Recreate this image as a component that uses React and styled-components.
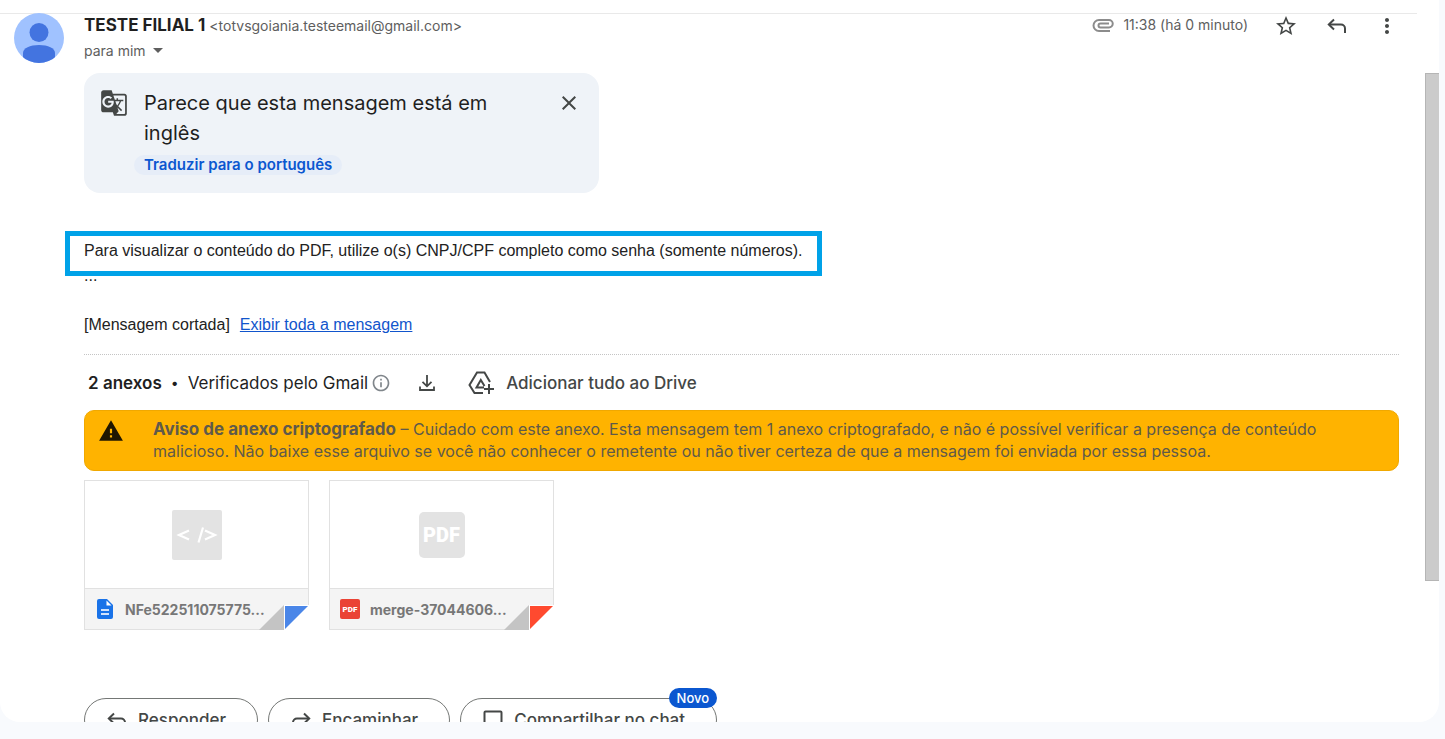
import styled, { createGlobalStyle } from 'styled-components';
import {
  MdArrowDropDown,
  MdStarBorder,
  MdMoreVert,
  MdGTranslate,
  MdClose,
  MdInfoOutline,
  MdWarning,
} from 'react-icons/md';

const GlobalStyle = createGlobalStyle`
  * {
    box-sizing: border-box;
  }
  body {
    margin: 0;
    background: #f8fafd;
    color: #1f1f1f;
    font-family: Inter, Roboto, sans-serif;
  }
  button {
    font-family: inherit;
    border: none;
    background: none;
    padding: 0;
    cursor: pointer;
  }
`;

const Page = styled.div`
  height: 100vh;
  padding: 0 6px 17px 0;
`;

const Panel = styled.main`
  display: flex;
  flex-direction: column;
  height: 100%;
  overflow: hidden;
  background: #fff;
  border-radius: 0 0 20px 20px;
`;

const TopLine = styled.div`
  flex: none;
  height: 14px;
  margin-right: 22px;
  border-bottom: 1px solid #e9e9e9;
`;

const Header = styled.header`
  flex: none;
  display: flex;
  align-items: flex-start;
  height: 59px;
  padding: 0 40px 0 14px;
  color: #5e5e5e;
`;

const Avatar = styled.svg`
  width: 50px;
  height: 50px;
  margin: -1px 20px 0 0;
`;

const Sender = styled.div`
  flex: 1;
  font-size: 14px;
`;

const SenderLine = styled.div`
  display: flex;
  align-items: center;
  gap: 4px;
  height: 22px;
`;

const Name = styled.strong`
  font-size: 17px;
  font-weight: 700;
  color: #1f1f1f;
`;

const Recipient = styled.button`
  display: flex;
  align-items: center;
  height: 28px;
  font-size: 14px;
  color: #5e5e5e;
`;

const HeaderTools = styled.div`
  display: flex;
  align-items: center;
  height: 24px;
  font-size: 14px;
`;

const Time = styled.span`
  height: 22px;
  line-height: 20px;
  margin: 0 26px 0 8px;
`;

const IconButton = styled.button`
  display: flex;
  align-items: center;
  justify-content: center;
  width: 24px;
  height: 24px;
  margin-right: ${({ $gap }) => $gap || 0}px;
  color: #444746;
`;

const Scroller = styled.div`
  flex: 1;
  display: flex;
  min-height: 0;
`;

const Content = styled.div`
  flex: 1;
  min-width: 0;
  padding: 0 26px 0 84px;
`;

const Track = styled.div`
  width: 14px;
`;

const Thumb = styled.div`
  height: 508px;
  background: #cbcbcb;
  border: solid #b5b5b5;
  border-width: 1px 0 1px 1px;
`;

const TranslateCard = styled.section`
  display: flex;
  align-items: flex-start;
  width: 515px;
  padding: 15px 18px 18px 16px;
  border-radius: 16px;
  background: #eff3f8;
  color: #444746;
`;

const TranslateIcon = styled(MdGTranslate)`
  flex: none;
  width: 28px;
  height: 30px;
`;

const TranslateText = styled.div`
  flex: 1;
  padding: 0 60px 0 6px;
`;

const TranslateTitle = styled.h2`
  margin: 0 0 7px 10px;
  font-size: 20px;
  font-weight: 400;
  line-height: 30px;
  color: #1f1f1f;
`;

const TranslateButton = styled.button`
  display: block;
  height: 20px;
  padding: 0 10px;
  border-radius: 10px;
  background: #e6edf8;
  font-size: 15px;
  font-weight: 600;
  line-height: 20px;
  color: #0b57d0;
`;

const CloseButton = styled(IconButton)`
  height: 30px;
`;

const Message = styled.div`
  padding: 45px 0 17px;
  border-bottom: 1px dotted #c4c4c4;
  font-family: 'Liberation Sans', Arial, sans-serif;
  font-size: 16px;
  line-height: 25px;
  color: #222;
`;

const Highlighted = styled.span`
  position: relative;
  display: inline-block;
  &::after {
    content: '';
    position: absolute;
    inset: -7px -19px -13px;
    border: 5px solid #00a2e8;
  }
`;

const Clipped = styled.p`
  margin: 24px 0 0;
`;

const Link = styled.a`
  margin-left: 10px;
  color: #1155cc;
`;

const AttachmentsBar = styled.div`
  display: flex;
  align-items: center;
  height: 55px;
  padding-left: 4px;
  font-size: 17px;
  color: #1f1f1f;
`;

const Count = styled.strong`
  font-weight: 600;
`;

const Dot = styled.span`
  margin: 0 9px;
  font-size: 14px;
`;

const InfoIcon = styled(MdInfoOutline)`
  width: 20px;
  height: 20px;
  margin: 0 24px 0 3px;
  color: #80868b;
`;

const DriveButton = styled.button`
  display: flex;
  align-items: center;
  gap: 11px;
  font-size: 17px;
  font-weight: 500;
  color: #444746;
`;

const Warning = styled.section`
  display: flex;
  align-items: flex-start;
  gap: 29px;
  padding: 7px 60px 8px 13px;
  border: 1px solid #f0a800;
  border-radius: 10px;
  background: #ffb300;
  font-size: 16px;
  line-height: 22px;
  color: #5f5a4a;
`;

const WarningIcon = styled(MdWarning)`
  flex: none;
  width: 26px;
  height: 26px;
  color: #201600;
`;

const WarningText = styled.p`
  margin: 0;
`;

const WarningTitle = styled.strong`
  font-size: 17px;
  font-weight: 700;
`;

const Files = styled.ul`
  display: flex;
  gap: 20px;
  margin: 9px 0 68px;
  padding: 0;
  list-style: none;
`;

const File = styled.li`
  position: relative;
  width: 225px;
  height: 150px;
  border: 1px solid #e1e1e1;
`;

const Preview = styled.div`
  display: flex;
  align-items: center;
  justify-content: center;
  height: 107px;
`;

const PdfTile = styled.span`
  display: flex;
  align-items: center;
  justify-content: center;
  width: ${({ $size }) => $size}px;
  height: ${({ $size }) => $size}px;
  border-radius: ${({ $size }) => ($size > 30 ? 5 : 2)}px;
  background: ${({ $color }) => $color};
  font-family: Roboto, sans-serif;
  font-size: ${({ $size }) => ($size > 30 ? 20 : 8)}px;
  font-weight: 900;
  color: #fff;
`;

const FileFooter = styled.div`
  display: flex;
  align-items: center;
  gap: 10px;
  height: 41px;
  padding-left: 10px;
  border-top: 1px solid #e1e1e1;
  background: #f4f4f4;
  font-size: 14px;
  font-weight: 700;
  color: #777;
`;

const Fold = styled.svg`
  position: absolute;
  right: -1px;
  bottom: -1px;
  width: 50px;
  height: 25px;
`;

const Actions = styled.div`
  display: flex;
  gap: 10px;
`;

const Action = styled.button`
  position: relative;
  display: flex;
  align-items: center;
  gap: 9px;
  height: 44px;
  padding: 0 31px 0 20px;
  border: 1px solid #747775;
  border-radius: 22px;
  font-size: 17px;
  font-weight: 500;
  color: #444746;
`;

const Badge = styled.span`
  position: absolute;
  top: -11px;
  right: -1px;
  padding: 0 8px;
  border-radius: 10px;
  background: #0b57d0;
  font-size: 13px;
  line-height: 20px;
  color: #fff;
`;

const ClipIcon = () => (
  <svg width="24" height="24" viewBox="0 0 24 24" fill="none" stroke="#8c8c8c" strokeWidth="2">
    <path d="M19 17H8A5.500 5.500 0 0 1 8 6h10a3.700 3.700 0 0 1 0 7.500H9.500a2 2 0 0 1 0-4H18" />
  </svg>
);

const ReplyIcon = ({ size = 24, flip }) => (
  <svg width={size} height={size} viewBox="0 0 24 24" fill="none" stroke="currentColor" strokeWidth="2">
    <g transform={flip ? 'translate(24 0) scale(-1 1)' : undefined}>
      <path d="M9 5.500 3.800 10.500 9 15.500" />
      <path d="M4 10.500H16a4 4 0 0 1 4 4V19" />
    </g>
  </svg>
);

const DownloadIcon = () => (
  <svg width="24" height="24" viewBox="0 0 24 24" fill="none" stroke="currentColor" strokeWidth="1.8">
    <path d="M12 4v11M7.500 10.800 12 15.300l4.500-4.500M5 15.500V19h14v-3.500" />
  </svg>
);

const DriveIcon = () => (
  <svg width="28" height="28" viewBox="0 0 28 28" fill="none" stroke="currentColor" strokeWidth="2">
    <path d="M16 24H7.500L2.500 16 10 3.500h7.500L23 13" />
    <path d="M17 18.500H9.500L13.800 11l3.700 6" />
    <path d="M22 15v10M17 20h10" />
  </svg>
);

const ChatIcon = () => (
  <svg width="24" height="24" viewBox="0 0 24 24" fill="none" stroke="currentColor" strokeWidth="2">
    <path d="M3.500 21.500V4.500a1 1 0 0 1 1-1h15a1 1 0 0 1 1 1v12a1 1 0 0 1-1 1H7.500z" />
  </svg>
);

const CodeTile = () => (
  <svg width="50" height="50" viewBox="0 0 50 50" fill="none" stroke="#fff" strokeWidth="2.2">
    <rect width="50" height="50" rx="2" fill="#e3e3e3" stroke="none" />
    <path d="M17 20.500 7 25l10 4.500M33 20.500 43 25l-10 4.500M31 17.500 26.500 32.500" />
  </svg>
);

const DocIcon = () => (
  <svg width="20" height="20" viewBox="0 0 20 20">
    <path d="M4 0h8l6 6v12a2 2 0 0 1-2 2H4a2 2 0 0 1-2-2V2a2 2 0 0 1 2-2z" fill="#1a73e8" />
    <path d="M11.500 1.500V6.500H16.500z" fill="#fff" />
    <path d="M6 11h8M6 15h8" stroke="#d2e3fc" strokeWidth="2" />
  </svg>
);

const files = [
  {
    name: 'NFe522511075775...',
    color: '#4a86e8',
    preview: <CodeTile />,
    icon: <DocIcon />,
  },
  {
    name: 'merge-37044606...',
    color: '#ff4a2f',
    preview: <PdfTile $size={46} $color="#e3e3e3">PDF</PdfTile>,
    icon: <PdfTile $size={20} $color="#ea4335">PDF</PdfTile>,
  },
];

const App = () => {
  return (
    <Page>
      <GlobalStyle />
      <Panel>
        <TopLine />
        <Header>
          <Avatar viewBox="0 0 50 50">
            <clipPath id="avatar">
              <circle cx="25" cy="25" r="25" />
            </clipPath>
            <g clipPath="url(#avatar)">
              <rect width="50" height="50" fill="#a0c2ff" />
              <circle cx="25" cy="19.500" r="9.500" fill="#4374e0" />
              <path d="M9 50V40c0-5 7-8 16-8s16 3 16 8v10z" fill="#4374e0" />
            </g>
          </Avatar>
          <Sender>
            <SenderLine>
              <Name>TESTE FILIAL 1</Name>
              <span>&lt;totvsgoiania.testeemail@gmail.com&gt;</span>
            </SenderLine>
            <Recipient type="button">
              para mim <MdArrowDropDown size={24} />
            </Recipient>
          </Sender>
          <HeaderTools>
            <ClipIcon />
            <Time>11:38 (há 0 minuto)</Time>
            <IconButton type="button" aria-label="Com estrela" $gap={27}>
              <MdStarBorder size={24} />
            </IconButton>
            <IconButton type="button" aria-label="Responder" $gap={26}>
              <ReplyIcon />
            </IconButton>
            <IconButton type="button" aria-label="Mais">
              <MdMoreVert size={24} />
            </IconButton>
          </HeaderTools>
        </Header>

        <Scroller>
          <Content>
            <TranslateCard>
              <TranslateIcon />
              <TranslateText>
                <TranslateTitle>Parece que esta mensagem está em inglês</TranslateTitle>
                <TranslateButton type="button">Traduzir para o português</TranslateButton>
              </TranslateText>
              <CloseButton type="button" aria-label="Fechar">
                <MdClose size={24} />
              </CloseButton>
            </TranslateCard>

            <Message>
              <Highlighted>
                Para visualizar o conteúdo do PDF, utilize o(s) CNPJ/CPF completo como senha (somente números).
              </Highlighted>
              <div>...</div>
              <Clipped>
                [Mensagem cortada]
                <Link href="#mensagem">Exibir toda a mensagem</Link>
              </Clipped>
            </Message>

            <AttachmentsBar>
              <Count>2 anexos</Count>
              <Dot>•</Dot>
              <span>Verificados pelo Gmail</span>
              <InfoIcon />
              <IconButton type="button" aria-label="Fazer o download de todos os anexos" $gap={28}>
                <DownloadIcon />
              </IconButton>
              <DriveButton type="button">
                <DriveIcon />
                Adicionar tudo ao Drive
              </DriveButton>
            </AttachmentsBar>

            <Warning>
              <WarningIcon />
              <WarningText>
                <WarningTitle>Aviso de anexo criptografado</WarningTitle> – Cuidado com este anexo. Esta mensagem
                tem 1 anexo criptografado, e não é possível verificar a presença de conteúdo malicioso. Não baixe
                esse arquivo se você não conhecer o remetente ou não tiver certeza de que a mensagem foi enviada
                por essa pessoa.
              </WarningText>
            </Warning>

            <Files>
              {files.map(({ name, color, preview, icon }) => (
                <File key={name}>
                  <Preview>{preview}</Preview>
                  <FileFooter>
                    {icon}
                    <span>{name}</span>
                  </FileFooter>
                  <Fold viewBox="0 0 50 25">
                    <path d="M25 0h25v25H25z" fill="#fff" />
                    <path d="M0 25 25 0v25z" fill="#c4c4c4" />
                    <path d="M26 1h23L26 24z" fill={color} />
                  </Fold>
                </File>
              ))}
            </Files>

            <Actions>
              <Action type="button">
                <ReplyIcon />
                Responder
              </Action>
              <Action type="button">
                <ReplyIcon flip />
                Encaminhar
              </Action>
              <Action type="button">
                <ChatIcon />
                Compartilhar no chat
                <Badge>Novo</Badge>
              </Action>
            </Actions>
          </Content>
          <Track>
            <Thumb />
          </Track>
        </Scroller>
      </Panel>
    </Page>
  );
};

export default App;
